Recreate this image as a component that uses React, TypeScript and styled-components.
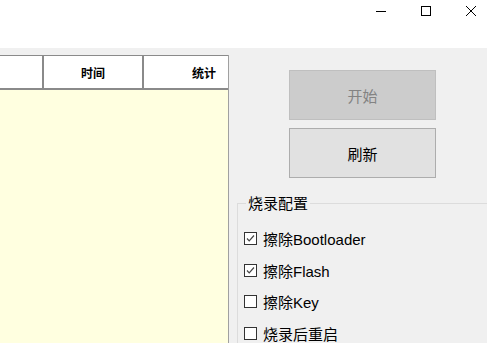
import React from "react";
import styled, { createGlobalStyle } from "styled-components";

const GlobalStyle = createGlobalStyle`
  html, body {
    margin: 0;
    padding: 0;
    width: 487px;
    height: 343px;
    overflow: hidden;
    background: #f0f0f0;
    font-family: "Liberation Sans", "Noto Sans CJK SC", sans-serif;
  }
`;

const Window = styled.div`
  width: 487px;
  height: 343px;
  display: flex;
  flex-direction: column;
  overflow: hidden;
`;

const TitleBar = styled.div`
  height: 48px;
  flex: none;
  background: #ffffff;
  display: flex;
  justify-content: flex-end;
  align-items: flex-start;
  margin-right: -6px;
`;

const CaptionButton = styled.div`
  width: 45px;
  height: 21px;
  display: flex;
  align-items: center;
  justify-content: center;
`;

const Body = styled.div`
  flex: 1;
  display: flex;
  background: #f0f0f0;
  min-height: 0;
`;

const TablePanel = styled.div`
  width: 229px;
  margin-top: 7px;
  display: flex;
  flex-direction: column;
  overflow: hidden;
  border-right: 1px solid #a0a0a0;
  box-sizing: border-box;
`;

const HeaderRow = styled.div`
  height: 35px;
  flex: none;
  display: flex;
  background: #ffffff;
  border-top: 1px solid #8a8a8a;
  border-bottom: 2px solid #8a8a8a;
  box-sizing: border-box;
`;

const HeaderCell = styled.div<{ $w: number }>`
  width: ${(p) => p.$w}px;
  flex: none;
  border-right: 2px solid #8a8a8a;
  box-sizing: border-box;
  display: flex;
  align-items: center;
  justify-content: center;
  font-family: "Noto Sans CJK SC", sans-serif;
  font-weight: bold;
  font-size: 12px;
  color: #000;
`;

const TableBody = styled.div`
  flex: 1;
  background: #ffffe0;
`;

const SidePanel = styled.div`
  flex: 1;
  display: flex;
  flex-direction: column;
  padding-left: 8px;
`;

const Buttons = styled.div`
  display: flex;
  flex-direction: column;
  gap: 8px;
  margin: 22px 0 0 52px;
`;

const ActionButton = styled.div<{ $disabled?: boolean }>`
  width: 147px;
  height: 50px;
  box-sizing: border-box;
  display: flex;
  align-items: center;
  justify-content: center;
  font-family: "Noto Sans CJK SC", sans-serif;
  font-size: 15px;
  background: ${(p) => (p.$disabled ? "#cccccc" : "#e1e1e1")};
  border: 1px solid ${(p) => (p.$disabled ? "#bfbfbf" : "#adadad")};
  color: ${(p) => (p.$disabled ? "#838383" : "#000")};
`;

const GroupBox = styled.fieldset`
  margin: 16px 0 0 0;
  padding: 17px 0 0 6px;
  border: 1px solid #dcdcdc;
  border-right: none;
  border-bottom: none;
  flex: 1;
  display: flex;
  flex-direction: column;
  gap: 12.7px;
`;

const Legend = styled.legend`
  padding: 0 2px;
  margin-left: 2px;
  font-family: "Noto Sans CJK SC", sans-serif;
  font-size: 15px;
  color: #000;
  line-height: 18px;
`;

const CheckRow = styled.label`
  display: flex;
  align-items: center;
  gap: 6px;
  height: 19px;
  font-size: 15px;
  color: #000;
`;

const Box = styled.span`
  width: 13px;
  height: 13px;
  box-sizing: border-box;
  border: 1px solid #333;
  background: #fff;
  display: flex;
  align-items: center;
  justify-content: center;
`;

const Cjk = styled.span`
  font-family: "Noto Sans CJK SC", sans-serif;
`;

const options = [
  { zh: "擦除", en: "Bootloader", checked: true },
  { zh: "擦除", en: "Flash", checked: true },
  { zh: "擦除", en: "Key", checked: false },
  { zh: "烧录后重启", en: "", checked: false },
];

export default function App() {
  return (
    <Window>
      <GlobalStyle />
      <TitleBar>
        <CaptionButton>
          <svg width="12" height="12" viewBox="0 0 12 12">
            <path d="M1 6.5h10" stroke="#000" strokeWidth="1" />
          </svg>
        </CaptionButton>
        <CaptionButton>
          <svg width="12" height="12" viewBox="0 0 12 12">
            <rect x="1.5" y="1.5" width="9" height="9" fill="none" stroke="#000" />
          </svg>
        </CaptionButton>
        <CaptionButton>
          <svg width="12" height="12" viewBox="0 0 12 12">
            <path d="M1 1l10 10M11 1L1 11" stroke="#000" strokeWidth="1" />
          </svg>
        </CaptionButton>
      </TitleBar>
      <Body>
        <TablePanel>
          <HeaderRow>
            <HeaderCell $w={44} />
            <HeaderCell $w={100}>时间</HeaderCell>
            <HeaderCell $w={122}>统计</HeaderCell>
          </HeaderRow>
          <TableBody />
        </TablePanel>
        <SidePanel>
          <Buttons>
            <ActionButton $disabled>开始</ActionButton>
            <ActionButton>刷新</ActionButton>
          </Buttons>
          <GroupBox>
            <Legend>烧录配置</Legend>
            {options.map((o, i) => (
              <CheckRow key={i}>
                <Box>
                  {o.checked && (
                    <svg width="9" height="9" viewBox="0 0 9 9">
                      <path d="M1 4.5l2.2 2.3L8 1.5" fill="none" stroke="#444" strokeWidth="1.2" />
                    </svg>
                  )}
                </Box>
                <span>
                  <Cjk>{o.zh}</Cjk>
                  {o.en}
                </span>
              </CheckRow>
            ))}
          </GroupBox>
        </SidePanel>
      </Body>
    </Window>
  );
}
